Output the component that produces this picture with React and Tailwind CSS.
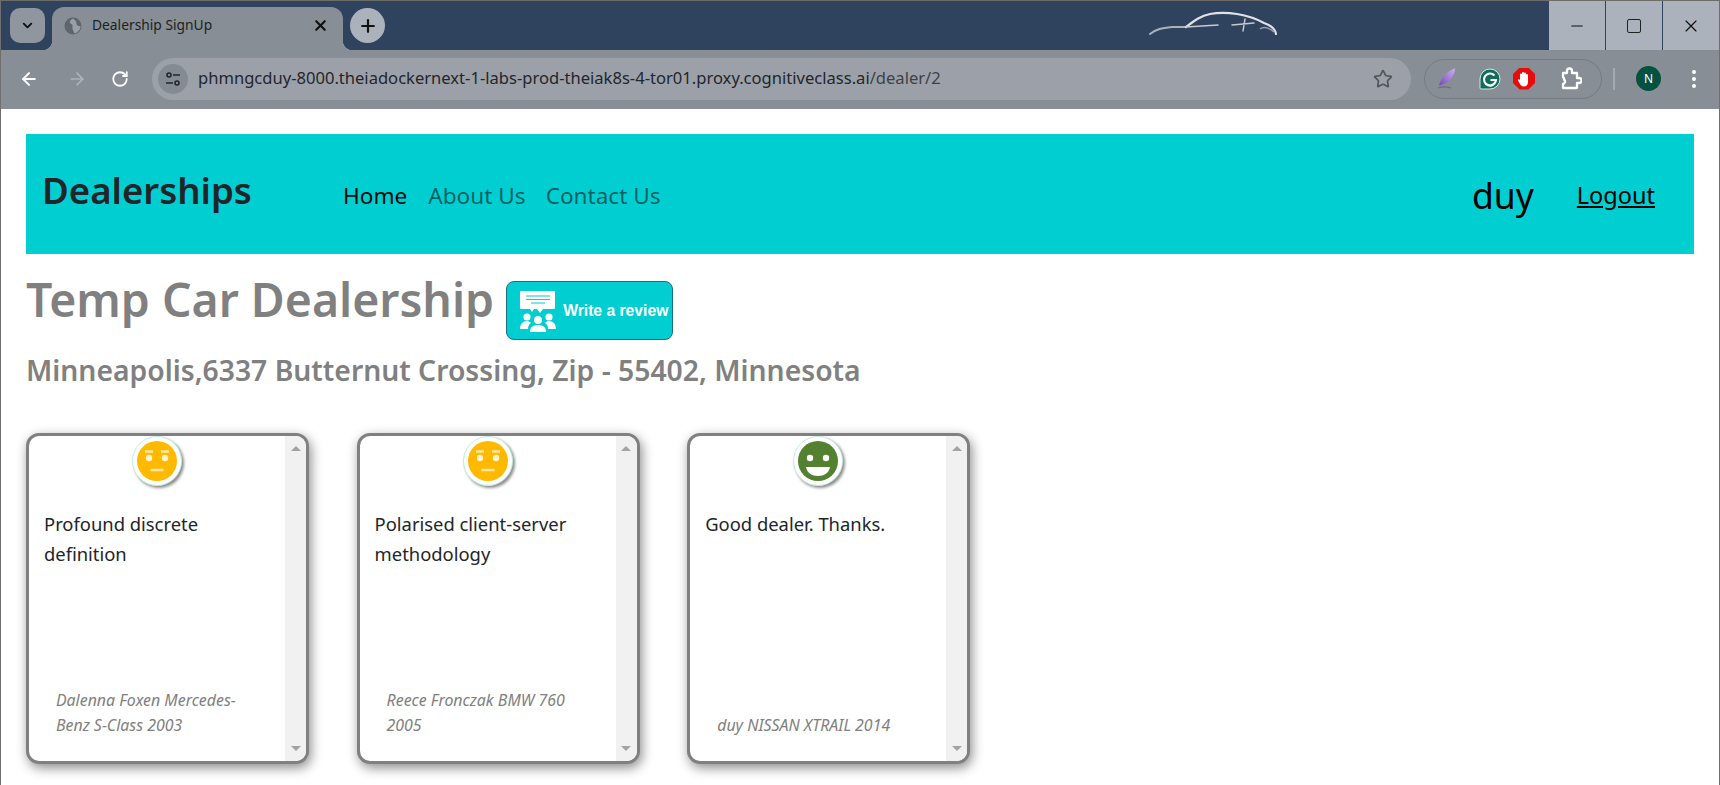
import { ArrowLeft, ArrowRight, RotateCw, Star, X, Minus, Plus, ChevronDown } from 'lucide-react'

const URL_HOST = 'phmngcduy-8000.theiadockernext-1-labs-prod-theiak8s-4-tor01.proxy.cognitiveclass.ai'

const reviews = [
  { id: 1, mood: 'neutral', text: 'Profound discrete definition', by: 'Dalenna Foxen Mercedes-Benz S-Class 2003' },
  { id: 2, mood: 'neutral', text: 'Polarised client-server methodology', by: 'Reece Fronczak BMW 760 2005' },
  { id: 3, mood: 'good', text: 'Good dealer. Thanks.', by: 'duy NISSAN XTRAIL 2014' },
]

function CarLogo() {
  return (
    <svg width="132" height="28" viewBox="0 0 132 28" fill="none" className="mr-[269px] mt-[7px] shrink-0 blur-[0.4px]">
      <path d="M2 26 C8 21 14 20 24 19 L38 19" stroke="#aab1ba" strokeWidth="2" strokeLinecap="round" />
      <path d="M38 19 C46 13 52 8 62 6 C78 3 100 6 116 15 C122 17 127 20 128 26" stroke="#dfe3e7" strokeWidth="2.2" strokeLinecap="round" />
      <path d="M38 19 L70 17 M84 17 L106 15 M97 11 L95 23" stroke="#c4c9cf" strokeWidth="1.5" strokeLinecap="round" />
      <path d="M112 21 C116 18 122 20 126 24" stroke="#9aa2ac" strokeWidth="1.5" />
    </svg>
  )
}

function WinButton({ children, last }) {
  return (
    <div className={`flex h-[49px] w-[56px] items-center justify-center bg-[#abb2bb] text-[#111] ${last ? '' : 'mr-[1px]'}`}>
      {children}
    </div>
  )
}

function TabGlobe() {
  return (
    <svg width="18" height="18" viewBox="0 0 18 18" className="shrink-0">
      <circle cx="9" cy="9" r="8.500" fill="#5f656c" />
      <path d="M9 1.500 C6 3 5 5 6.500 6.500 C8 7 9 8 8.500 10 C8 12 9.500 14 10.500 16.500 C14 15.500 16.500 12.500 16.500 9 C14.500 9.500 12.500 8.500 12.500 6.500 C12.500 4.500 11 3 9 1.500Z" fill="#9aa0a7" />
    </svg>
  )
}

function TitleBar() {
  return (
    <div className="flex h-[50px] shrink-0 border-t border-[#6d6d68] bg-[#2f435f]">
      <div className="ml-[9px] mt-[7px] flex h-[35px] w-[35px] items-center justify-center rounded-[10px] bg-[#8f969e]">
        <ChevronDown size={15} strokeWidth={3} className="text-[#111]" />
      </div>
      <div className="relative ml-[7px] mt-[6px] flex h-[43px] w-[291px] items-center rounded-t-[12px] bg-[#878e96] pb-[6px] pl-[12px] pr-[14px]">
        <div className="absolute -left-[10px] bottom-0 h-[10px] w-[10px] bg-[radial-gradient(circle_at_0_0,#2f435f_10px,#878e96_10.5px)]" />
        <div className="absolute -right-[10px] bottom-0 h-[10px] w-[10px] bg-[radial-gradient(circle_at_100%_0,#2f435f_10px,#878e96_10.5px)]" />
        <TabGlobe />
        <span className="ml-[10px] flex-1 font-['Noto_Sans'] text-[13.8px] text-[#1d1f22]">Dealership SignUp</span>
        <X size={17} strokeWidth={3} className="text-[#111]" />
      </div>
      <div className="ml-[7px] mt-[7px] flex h-[35px] w-[35px] items-center justify-center rounded-full bg-[#abb2bb]">
        <Plus size={20} strokeWidth={2.6} className="text-[#111]" />
      </div>
      <div className="flex-1" />
      <CarLogo />
      <div className="flex">
        <WinButton><Minus size={18} strokeWidth={1.5} /></WinButton>
        <WinButton><div className="h-[14px] w-[14px] rounded-[2px] border-[1.5px] border-[#222]" /></WinButton>
        <WinButton last><X size={20} strokeWidth={1.4} /></WinButton>
      </div>
    </div>
  )
}

function TuneIcon() {
  return (
    <svg width="16" height="16" viewBox="0 0 16 16" fill="none" stroke="#23262a" strokeWidth="1.6">
      <circle cx="4" cy="4" r="2" />
      <path d="M8 4h7M1 12h7" />
      <circle cx="12" cy="12" r="2" />
    </svg>
  )
}

function Extensions() {
  return (
    <div className="flex h-[40px] w-[178px] items-center rounded-full border border-[#757c84] pl-[11px]">
      <svg width="22" height="24" viewBox="0 0 22 24">
        <defs>
          <linearGradient id="feather" x1="0" y1="1" x2="1" y2="0">
            <stop offset="0" stopColor="#6e4bb0" />
            <stop offset="1" stopColor="#d3aef5" />
          </linearGradient>
        </defs>
        <path d="M3 19 C4 12 10 5 19 1 C19 9 13 16 5 18 Z" fill="url(#feather)" />
        <path d="M2 21 C7 19 12 20 15 21" stroke="#6a6f76" strokeWidth="1.2" fill="none" />
      </svg>
      <svg width="24" height="24" viewBox="0 0 24 24" className="ml-[20px]">
        <path d="M12 2 A10 10 0 1 1 12 22 L3 22 Q2 22 2 21 L2 12 A10 10 0 0 1 12 2Z" fill="#0f6e5b" stroke="#d7e6e1" strokeWidth="1" />
        <path d="M16.500 8.500 A6 6 0 1 0 18 13 L12.500 13" stroke="#fff" strokeWidth="2.2" fill="none" />
      </svg>
      <div className="ml-[11px] flex h-[22px] w-[22px] items-center justify-center bg-[#e60c0c] [clip-path:polygon(30%_0,70%_0,100%_30%,100%_70%,70%_100%,30%_100%,0_70%,0_30%)]">
        <svg width="14" height="16" viewBox="0 0 14 16" fill="#fff">
          <path d="M3 8V3.500a1 1 0 0 1 2 0V2a1 1 0 0 1 2 0v.5a1 1 0 0 1 2 0V4a1 1 0 0 1 2 0v6.500C11 14 9.500 15.500 7 15.500 4.500 15.500 3.500 14 2.500 12L1 9.500c-.5-1 .8-1.800 1.400-1L3 9.500Z" />
        </svg>
      </div>
      <svg width="22" height="24" viewBox="0 0 22 24" fill="none" stroke="#fff" strokeWidth="2.300" strokeLinejoin="round" className="ml-[25px]">
        <path d="M3 6h4V4a2.500 2.500 0 0 1 5 0v2h5v5h2a2.500 2.500 0 0 1 0 5h-2v5H3v-4a2.500 2.500 0 0 0 1-4.500 2.500 2.500 0 0 0-1-2.500Z" />
      </svg>
    </div>
  )
}

function Toolbar() {
  return (
    <div className="flex h-[59px] shrink-0 items-center bg-[#878e96] pb-[2px] pr-[16px]">
      <ArrowLeft size={20} strokeWidth={2.4} className="ml-[18px] text-white" />
      <ArrowRight size={20} strokeWidth={2} className="ml-[28px] text-[#aeb3b9]" />
      <RotateCw size={18} strokeWidth={2.4} className="ml-[24px] text-white" />
      <div className="ml-[23px] flex h-[42px] w-[1259px] items-center rounded-full bg-[#9ca1a9] pl-[6px] pr-[18px]">
        <div className="flex h-[30px] w-[30px] items-center justify-center rounded-full bg-[#858b93]">
          <TuneIcon />
        </div>
        <div className="ml-[10px] flex-1 whitespace-nowrap font-['Noto_Sans'] text-[16.57px] text-[#23262a]">
          {URL_HOST}<span className="text-[#3d4146]">/dealer/2</span>
        </div>
        <Star size={20} strokeWidth={2} className="text-[#50555a]" />
      </div>
      <div className="ml-[13px]"><Extensions /></div>
      <div className="ml-[11px] h-[22px] w-[2px] bg-[#a3a9b0]" />
      <div className="ml-[21px] flex h-[25px] w-[25px] items-center justify-center rounded-full bg-[#03513f] font-['Noto_Sans'] text-[12px] text-white">N</div>
      <div className="ml-[31px] flex flex-col gap-[3px]">
        <div className="h-[4px] w-[4px] rounded-full bg-white" />
        <div className="h-[4px] w-[4px] rounded-full bg-white" />
        <div className="h-[4px] w-[4px] rounded-full bg-white" />
      </div>
    </div>
  )
}

function ReviewBadge() {
  return (
    <div className="ml-[12px] mt-[27px] flex h-[59px] w-[167px] shrink-0 items-center rounded-[8px] border border-[#1d6f82] bg-[#00ced1] pl-[12px]">
      <svg width="38" height="42" viewBox="0 0 38 42" fill="#fff" className="shrink-0">
        <path d="M2 1h33a1 1 0 0 1 1 1v16a1 1 0 0 1-1 1H24l-3 4-3-4h-3l-2 3-2-3H2a1 1 0 0 1-1-1V2a1 1 0 0 1 1-1Z" />
        <path d="M7 6h24M7 9.500h24M12 13h14" stroke="#00ced1" strokeWidth="1" />
        <circle cx="8" cy="27" r="3.600" />
        <circle cx="30" cy="27" r="3.600" />
        <circle cx="19" cy="30" r="4" />
        <path d="M1 39c0-5 3-8 7-8 2 0 3 1 4 2-2 1-3 3-3 6H1ZM37 39c0-5-3-8-7-8-2 0-3 1-4 2 2 1 3 3 3 6h8ZM11 42c0-5 3-7 8-7s8 2 8 7H11Z" />
      </svg>
      <span className="ml-[6px] whitespace-nowrap font-['Liberation_Sans'] text-[15.7px] font-bold text-white">Write a review</span>
    </div>
  )
}

function Face({ mood }) {
  const good = mood === 'good'
  return (
    <div className="mx-auto h-[50px] w-[50px] rounded-full border border-[#bfeee0] bg-white p-[4px] shadow-[2px_2px_3px_rgba(0,0,0,0.45)]">
      <svg viewBox="0 0 40 40" width="40" height="40">
        <circle cx="20" cy="20" r="20" fill={good ? '#53812f' : '#ffba00'} />
        {good ? (
          <>
            <circle cx="12" cy="17" r="3.200" fill="#fff" />
            <circle cx="28" cy="17" r="3.200" fill="#fff" />
            <path d="M8 26h24c-1 6-6 9-12 9s-11-3-12-9Z" fill="#fff" />
          </>
        ) : (
          <>
            <path d="M8 10.500h8M24 10.500h8" stroke="#ffe6a6" strokeWidth="2.400" />
            <circle cx="12" cy="17" r="3.200" fill="#fff3d0" />
            <circle cx="28" cy="17" r="3.200" fill="#fff3d0" />
            <path d="M13.500 29h13" stroke="#ffe6a6" strokeWidth="2.400" />
          </>
        )}
      </svg>
    </div>
  )
}

function FakeScrollbar() {
  return (
    <div className="flex w-[21px] shrink-0 flex-col items-center justify-between bg-[#f1f1f1] py-[10px]">
      <div className="h-0 w-0 border-x-[5px] border-b-[5px] border-x-transparent border-b-[#a3a3a3]" />
      <div className="h-0 w-0 border-x-[5px] border-t-[5px] border-x-transparent border-t-[#a3a3a3]" />
    </div>
  )
}

function ReviewCard({ review }) {
  return (
    <div className="flex h-[331px] w-[283px] overflow-hidden rounded-[13px] border-[3px] border-[#808080] bg-white shadow-[2px_4px_12px_rgba(0,0,0,0.45)]">
      <div className="flex min-w-0 flex-1 flex-col">
        <Face mood={review.mood} />
        <p className="mt-[23px] px-[15px] text-[18.4px] leading-[30px] text-[#212529]">{review.text}</p>
        <p className="mb-[23px] mt-auto pl-[27px] pr-[46px] text-[15.9px] italic leading-[25px] text-[#808080]">{review.by}</p>
      </div>
      <FakeScrollbar />
    </div>
  )
}

export default function App() {
  return (
    <div className="flex h-screen flex-col overflow-hidden border-x border-[#6f6f6f] bg-white font-['Noto_Sans',sans-serif]">
      <TitleBar />
      <Toolbar />
      <div className="flex-1 px-[25px] pt-[25px]">
        <nav className="flex h-[120px] items-center bg-[#00ced1] pl-[16px] pr-[39px] pt-[4px]">
          <a className="-mt-[11px] w-[301px] text-[36.6px] font-semibold text-[#212529]">Dealerships</a>
          <a className="text-[22.6px] text-[#0a0a0a]">Home</a>
          <a className="ml-[21px] text-[22.6px] text-black/55">About Us</a>
          <a className="ml-[20px] text-[22.6px] text-black/55">Contact Us</a>
          <span className="ml-auto text-[35.5px] text-black">duy</span>
          <a className="ml-[43px] text-[23.5px] text-black underline">Logout</a>
        </nav>
        <div className="flex">
          <h1 className="mt-[13px] text-[46.4px] font-semibold leading-[64px] text-[#808080]">Temp Car Dealership</h1>
          <ReviewBadge />
        </div>
        <h4 className="mt-[11px] text-[28.3px] font-semibold leading-[38px] text-[#808080]">Minneapolis,6337 Butternut Crossing, Zip - 55402, Minnesota</h4>
        <div className="mt-[44px] flex gap-[47.6px]">
          {reviews.map((r) => <ReviewCard key={r.id} review={r} />)}
        </div>
      </div>
    </div>
  )
}
